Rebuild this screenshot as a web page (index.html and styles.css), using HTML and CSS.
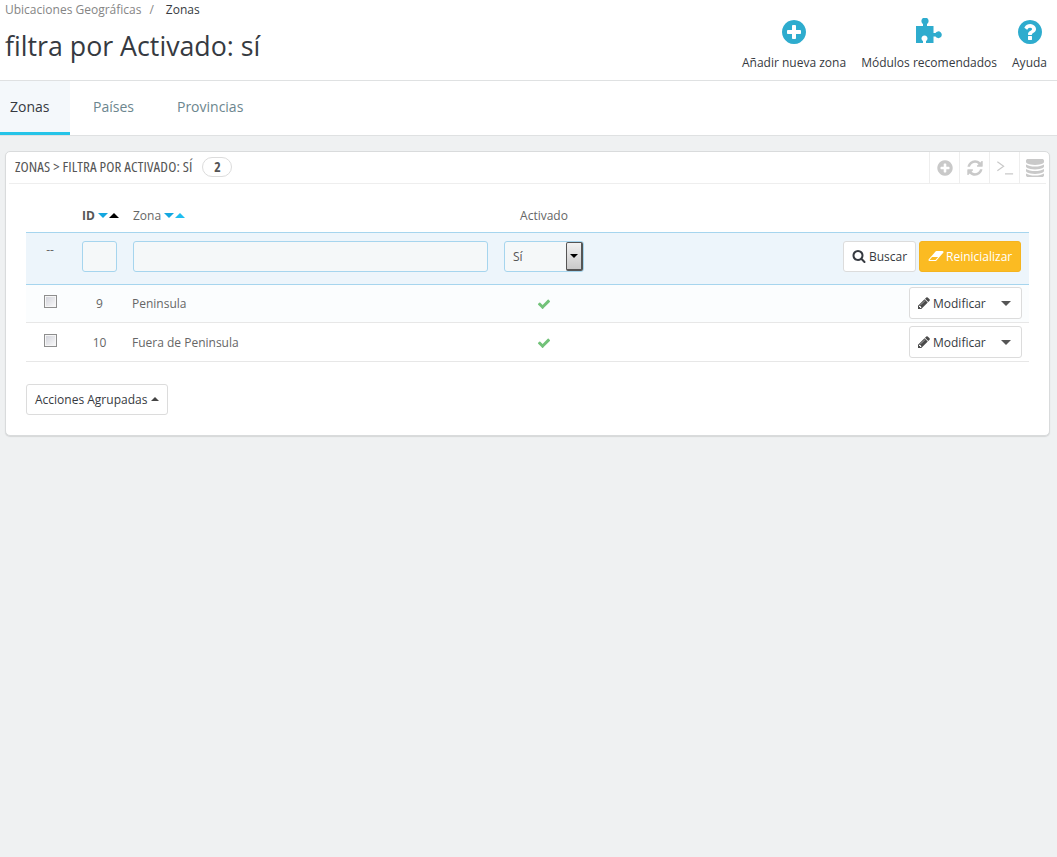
FILE: index.html
```html
<!DOCTYPE html>
<html lang="es">
<head>
<meta charset="utf-8">
<title>Zonas</title>
<link rel="stylesheet" href="styles.css">
</head>
<body>
<header class="page-head">
  <div class="head-left">
    <div class="crumbs"><span>Ubicaciones Geográficas</span><i>/</i><b>Zonas</b></div>
    <h1>filtra por Activado: sí</h1>
  </div>
  <nav class="toolbar">
    <a class="tool">
      <svg class="tool-ico" viewBox="128 128 1536 1536"><path d="M1344 960v-128q0-26-19-45t-45-19h-256v-256q0-26-19-45t-45-19h-128q-26 0-45 19t-19 45v256h-256q-26 0-45 19t-19 45v128q0 26 19 45t45 19h256v256q0 26 19 45t45 19h128q26 0 45-19t19-45v-256h256q26 0 45-19t19-45zm320-64q0 209-103 385.5t-279.5 279.5-385.5 103-385.5-103-279.5-279.5-103-385.5 103-385.5 279.5-279.5 385.5-103 385.5 103 279.5 279.5 103 385.5z"/></svg>
      <span>Añadir nueva zona</span>
    </a>
    <a class="tool">
      <svg class="tool-ico puzzle" viewBox="0 0 27 26"><path d="M0 8H7V6A3.600 3.600 0 1 1 11 6V8H17.500V15H19.500A3.400 3.400 0 1 1 19.500 18.500H17.500V25H10V23A3 3 0 1 0 7 23V25H0Z"/></svg>
      <span>Módulos recomendados</span>
    </a>
    <a class="tool">
      <svg class="tool-ico" viewBox="128 128 1536 1536"><path d="M1024 1376v-192q0-14-9-23t-23-9h-192q-14 0-23 9t-9 23v192q0 14 9 23t23 9h192q14 0 23-9t9-23zm256-672q0-88-55.5-163t-138.5-116-170-41q-243 0-371 213-15 24 8 42l132 100q7 6 19 6 16 0 25-12 53-68 86-92 34-24 86-24 48 0 85.5 26t37.5 59q0 38-20 61t-68 45q-63 28-115.5 86.5t-52.5 125.5v36q0 14 9 23t23 9h192q14 0 23-9t9-23q0-19 21.5-49.5t54.5-49.5q32-18 49-28.5t46-35 44.5-48 28-60.5 12.5-81zm384 192q0 209-103 385.5t-279.5 279.5-385.5 103-385.5-103-279.5-279.5-103-385.5 103-385.5 279.5-279.5 385.5-103 385.5 103 279.5 279.5 103 385.5z"/></svg>
      <span>Ayuda</span>
    </a>
  </nav>
</header>

<nav class="tabs">
  <a class="tab active">Zonas</a>
  <a class="tab">Países</a>
  <a class="tab">Provincias</a>
</nav>

<main class="content">
  <section class="panel">
    <div class="panel-head">
      <span class="panel-title">ZONAS &gt; FILTRA POR ACTIVADO: SÍ</span>
      <span class="badge">2</span>
      <div class="panel-actions">
        <a class="pa"><svg viewBox="0 0 1792 1792"><path d="M1344 960v-128q0-26-19-45t-45-19h-256v-256q0-26-19-45t-45-19h-128q-26 0-45 19t-19 45v256h-256q-26 0-45 19t-19 45v128q0 26 19 45t45 19h256v256q0 26 19 45t45 19h128q26 0 45-19t19-45v-256h256q26 0 45-19t19-45zm320-64q0 209-103 385.5t-279.5 279.5-385.5 103-385.5-103-279.5-279.5-103-385.5 103-385.5 279.5-279.5 385.5-103 385.5 103 279.5 279.5 103 385.5z"/></svg></a>
        <a class="pa"><svg viewBox="0 0 1792 1792"><path d="M1639 1056q0 5-1 7-64 268-268 434.5t-478 166.5q-146 0-282.5-55t-243.5-157l-129 129q-19 19-45 19t-45-19-19-45v-448q0-26 19-45t45-19h448q26 0 45 19t19 45-19 45l-137 137q71 66 161 102t187 36q134 0 250-65t186-179q11-17 53-117 8-23 30-23h192q13 0 22.5 9.5t9.5 22.5zm25-800v448q0 26-19 45t-45 19h-448q-26 0-45-19t-19-45 19-45l138-138q-148-137-349-137-134 0-250 65t-186 179q-11 17-53 117-8 23-30 23h-199q-13 0-22.5-9.5t-9.5-22.5v-7q65-268 270-434.5t480-166.5q146 0 284 55.5t245 156.5l130-129q19-19 45-19t45 19 19 45z"/></svg></a>
        <a class="pa"><svg viewBox="0 0 20 20"><path class="term" d="M1.500 3l7 5-7 5M10 16.500h9"/></svg></a>
        <a class="pa"><svg class="db" viewBox="128 128 1536 1536"><path d="M896 768q237 0 443-43t325-127v170q0 69-103 128t-280 93.500-385 34.500-385-34.500-280-93.500-103-128v-170q119 84 325 127t443 43zm0 768q237 0 443-43t325-127v170q0 69-103 128t-280 93.500-385 34.500-385-34.500-280-93.500-103-128v-170q119 84 325 127t443 43zm0-384q237 0 443-43t325-127v170q0 69-103 128t-280 93.500-385 34.500-385-34.500-280-93.500-103-128v-170q119 84 325 127t443 43zm0-1152q208 0 385 34.500t280 93.500 103 128v128q0 69-103 128t-280 93.500-385 34.500-385-34.500-280-93.500-103-128v-128q0-69 103-128t280-93.500 385-34.500z"/></svg></a>
      </div>
    </div>

    <table class="grid">
      <colgroup>
        <col class="c-check"><col class="c-id"><col class="c-zone"><col class="c-on"><col class="c-act">
      </colgroup>
      <thead>
        <tr class="head-row">
          <th></th>
          <th class="strong">ID<span class="sort"><em class="down cyan"></em><em class="up black"></em></span></th>
          <th>Zona<span class="sort"><em class="down cyan"></em><em class="up cyan"></em></span></th>
          <th class="center">Activado</th>
          <th></th>
        </tr>
        <tr class="filter-row">
          <td class="dash">--</td>
          <td><input class="field" type="text"></td>
          <td><input class="field" type="text"></td>
          <td>
            <div class="fake-select"><span class="val">Sí</span><span class="arrow"><em class="down black"></em></span></div>
          </td>
          <td class="right">
            <div class="btns">
              <button class="btn"><svg class="ico search" viewBox="0 0 1792 1792"><path d="M1216 832q0-185-131.500-316.500t-316.500-131.500-316.500 131.500-131.500 316.500 131.500 316.500 316.500 131.500 316.500-131.500 131.500-316.500zm512 832q0 52-38 90t-90 38q-54 0-90-38l-343-342q-179 124-399 124-143 0-273.500-55.500t-225-150-150-225-55.500-273.500 55.500-273.500 150-225 225-150 273.500-55.500 273.500 55.500 225 150 150 225 55.500 273.500q0 220-124 399l343 343q37 37 37 90z"/></svg>Buscar</button>
              <button class="btn warn"><svg class="ico eraser" viewBox="0 0 2048 1792"><path d="M960 1408l336-384h-768l-336 384h768zm1013-1077q15 34 9.500 71.500t-30.500 65.500l-896 1024q-38 44-96 44h-768q-38 0-69.500-20.500t-47.500-54.500q-15-34-9.500-71.500t30.500-65.500l896-1024q38-44 96-44h768q38 0 69.500 20.500t47.500 54.500z"/></svg>Reinicializar</button>
            </div>
          </td>
        </tr>
      </thead>
      <tbody>
        <tr class="row row-a">
          <td class="center"><input class="check" type="checkbox"></td>
          <td class="center">9</td>
          <td>Peninsula</td>
          <td class="center"><svg class="ok" viewBox="0 0 1792 1792"><path d="M1671 566q0 40-28 68l-724 724-136 136q-28 28-68 28t-68-28l-136-136-362-362q-28-28-28-68t28-68l136-136q28-28 68-28t68 28l294 295 656-657q28-28 68-28t68 28l136 136q28 28 28 68z"/></svg></td>
          <td class="right"><button class="btn edit"><svg class="ico pencil" viewBox="0 0 1792 1792"><path d="M491 1536l91-91-235-235-91 91v107h128v128h107zm523-928q0-22-22-22-10 0-17 7l-542 542q-7 7-7 17 0 22 22 22 10 0 17-7l542-542q7-7 7-17zm-54-192l416 416-832 832h-416v-416zm683 96q0 53-37 90l-166 166-416-416 166-165q36-38 90-38 53 0 91 38l235 234q37 39 37 91z"/></svg>Modificar<em class="down caret"></em></button></td>
        </tr>
        <tr class="row row-b">
          <td class="center"><input class="check" type="checkbox"></td>
          <td class="center">10</td>
          <td>Fuera de Peninsula</td>
          <td class="center"><svg class="ok" viewBox="0 0 1792 1792"><path d="M1671 566q0 40-28 68l-724 724-136 136q-28 28-68 28t-68-28l-136-136-362-362q-28-28-28-68t28-68l136-136q28-28 68-28t68 28l294 295 656-657q28-28 68-28t68 28l136 136q28 28 28 68z"/></svg></td>
          <td class="right"><button class="btn edit"><svg class="ico pencil" viewBox="0 0 1792 1792"><path d="M491 1536l91-91-235-235-91 91v107h128v128h107zm523-928q0-22-22-22-10 0-17 7l-542 542q-7 7-7 17 0 22 22 22 10 0 17-7l542-542q7-7 7-17zm-54-192l416 416-832 832h-416v-416zm683 96q0 53-37 90l-166 166-416-416 166-165q36-38 90-38 53 0 91 38l235 234q37 39 37 91z"/></svg>Modificar<em class="down caret"></em></button></td>
        </tr>
      </tbody>
    </table>

    <button class="btn bulk">Acciones Agrupadas<em class="up dark"></em></button>
  </section>
</main>
</body>
</html>
```

FILE: styles.css
```css
* { box-sizing: border-box; }
html, body { height: 100%; }
body {
  margin: 0;
  background: #eff1f2;
  font-family: "Open Sans", sans-serif;
  font-size: 12px;
  color: #666;
}

/* page header */
.page-head {
  height: 81px;
  background: #fff;
  border-bottom: 1px solid #dfe1e2;
  display: flex;
  justify-content: space-between;
  padding: 0 10px 0 5px;
}
.crumbs {
  font-size: 12px;
  line-height: 17px;
  height: 17px;
  padding-top: 1px;
  color: #858585;
  display: flex;
}
.crumbs i { font-style: normal; margin: 0 12px 0 8px; color: #858585; }
.crumbs b { font-weight: 400; color: #363a41; }
h1 {
  margin: 11px 0 0;
  font-size: 26.75px;
  line-height: 36px;
  font-weight: 400;
  color: #363a41;
}
.toolbar { display: flex; gap: 15px; }
.tool {
  display: flex;
  flex-direction: column;
  align-items: center;
  padding-top: 20px;
  color: #363a41;
  font-size: 12px;
}
.tool span { line-height: 17px; margin-top: 10px; }
.tool-ico { width: 24px; height: 24px; fill: #2eacce; display: block; }
.tool-ico.puzzle { width: 27px; height: 26px; margin-top: -2px; }

/* tabs */
.tabs {
  height: 55px;
  background: #fff;
  border-bottom: 1px solid #dfe1e2;
  display: flex;
}
.tab {
  height: 54px;
  padding: 0 22px;
  font-size: 14px;
  line-height: 52px;
  color: #6c868e;
}
.tab.active {
  width: 70px;
  padding: 0 10px;
  background: #f4f8fb;
  border-bottom: 3px solid #25c4e8;
  color: #363a41;
}
.tab.active + .tab { padding: 0 21px 0 23px; }

/* panel */
.content { padding: 15px 7px 0 5px; }
.panel {
  height: 285px;
  background: #fff;
  border: 1px solid #d9dbdc;
  border-radius: 5px;
  box-shadow: 0 1px 1px #d5d7d8;
  padding: 0 20px;
}
.panel-head {
  height: 32px;
  margin: 0 -17px;
  padding-left: 6px;
  border-bottom: 1px solid #eeeeee;
  display: flex;
  align-items: center;
}
.panel-title {
  font-family: "Open Sans", sans-serif;
  font-stretch: 75%;
  font-size: 15px;
  letter-spacing: .1px;
  color: #555;
  margin-bottom: 4px;
}
.badge {
  margin-left: 10px;
  margin-bottom: 2px;
  width: 30px;
  height: 20px;
  border: 1px solid #dcdcdc;
  border-radius: 10px;
  text-align: center;
  font-size: 14px;
  line-height: 17px;
  font-weight: 700;
  font-stretch: 75%;
  color: #555;
}
.panel-actions { margin-left: auto; margin-right: -3px; display: flex; height: 31px; }
.pa {
  width: 30px;
  height: 31px;
  border-left: 1px solid #eeeeee;
  display: flex;
  align-items: center;
  justify-content: center;
}
.pa svg { width: 18px; height: 18px; fill: #c9c9c9; }
.pa .term { fill: none; stroke: #c9c9c9; stroke-width: 1.3; }

/* table */
.grid {
  width: 1003px;
  border-collapse: collapse;
  table-layout: fixed;
}
.c-check { width: 48px; }
.c-id { width: 51px; }
.c-zone { width: 371px; }
.c-on { width: 96px; }
th, td { padding: 0 8px; font-weight: 400; text-align: left; }
.head-row { height: 48px; }
.head-row th { padding-top: 15px; color: #666; font-size: 12px; white-space: nowrap; }
.head-row .strong { font-weight: 700; color: #555; }
.center, th.center { text-align: center; }
.right { text-align: right; }
.sort { display: inline-flex; gap: 1px; margin-left: 3px; vertical-align: 2px; }
.down, .up { display: inline-block; width: 0; height: 0; border-left: 5px solid transparent; border-right: 5px solid transparent; }
.down { border-top: 5px solid currentColor; }
.up { border-bottom: 5px solid currentColor; }
.cyan { color: #13a7e0; }
.sort .up.cyan { color: #1fbef0; }
.black { color: #000; }
.dark { color: #444; border-left-width: 4px; border-right-width: 4px; border-bottom-width: 4px; }

.filter-row { height: 52px; background: #edf5fb; border-top: 1px solid #a6d5ee; border-bottom: 1px solid #a6d5ee; }
.filter-row td { padding-bottom: 4px; }
.filter-row .dash { padding: 0 0 18px 0; text-align: center; font-size: 12px; color: #666; }
.field {
  display: block;
  width: 100%;
  height: 31px;
  border: 1px solid #a6d5ee;
  border-radius: 3px;
  background: #f5f8f9;
}
.fake-select {
  width: 80px;
  height: 31px;
  border: 1px solid #a6d5ee;
  border-radius: 3px;
  background: #f5f8f9;
  display: flex;
  align-items: center;
  justify-content: space-between;
  color: #555;
}
.val { padding-left: 8px; }
.arrow {
  width: 17px;
  height: 29px;
  border: 1px solid #555;
  border-right-width: 2px;
  border-bottom-width: 2px;
  border-radius: 2px;
  background: linear-gradient(#f2f2f2, #c9c9c9);
  display: flex;
  align-items: center;
  justify-content: center;
}
.arrow .down { border-left-width: 4px; border-right-width: 4px; border-top-width: 4px; }

.btns { display: flex; justify-content: flex-end; gap: 3px; }
.btn {
  height: 31px;
  font-family: "Open Sans", sans-serif;
  font-size: 12px;
  color: #363a41;
  background: #fff;
  border: 1px solid #dcdcdc;
  border-radius: 3px;
  padding: 0 8px;
  display: inline-flex;
  align-items: center;
  white-space: nowrap;
}
.ico { fill: #363a41; flex: none; }
.search { width: 14px; height: 14px; margin-right: 3px; }
.btns .btn { width: 73px; }
.btns .btn.warn {
  width: 102px;
  background: #fbbb22;
  border-color: #f5b41f;
  color: #fff;
  padding: 0 8px;
}
.eraser { width: 16px; height: 14px; fill: #fff; margin-right: 2px; }
.pencil { width: 14px; height: 14px; margin: 0 2px 0 -1px; fill: #4a4a4a; }
.edit { width: 113px; height: 32px; vertical-align: middle; }
.caret { color: #555; margin-left: auto; margin-right: 2px; border-left-width: 5px; border-right-width: 5px; border-top-width: 5px; }

.row { background: #fbfdfe; border-bottom: 1px solid #e7e7e7; }
.row-b { background: #fff; }
.row-a { height: 38px; }
.row-b { height: 39px; }
.row .right { text-align: right; padding-right: 7px; }
.row td { color: #666; }
.row td:nth-child(3) { padding-left: 7px; }
.row-b td { padding-top: 1px; }
.check {
  appearance: none;
  display: block;
  width: 13px;
  height: 13px;
  margin: -3px auto 0 10px;
  border: 1px solid #8e8e8e;
  background: linear-gradient(135deg, #cfd0d8, #fbfbfb);
  box-shadow: inset 0 0 0 1px #f6f6f6;
}
.ok { width: 14px; height: 14px; fill: #72c279; display: block; margin: 2px auto 0; }

.bulk { margin-top: 22px; width: 142px; padding: 0 8px; gap: 4px; color: #363a41; }
```
